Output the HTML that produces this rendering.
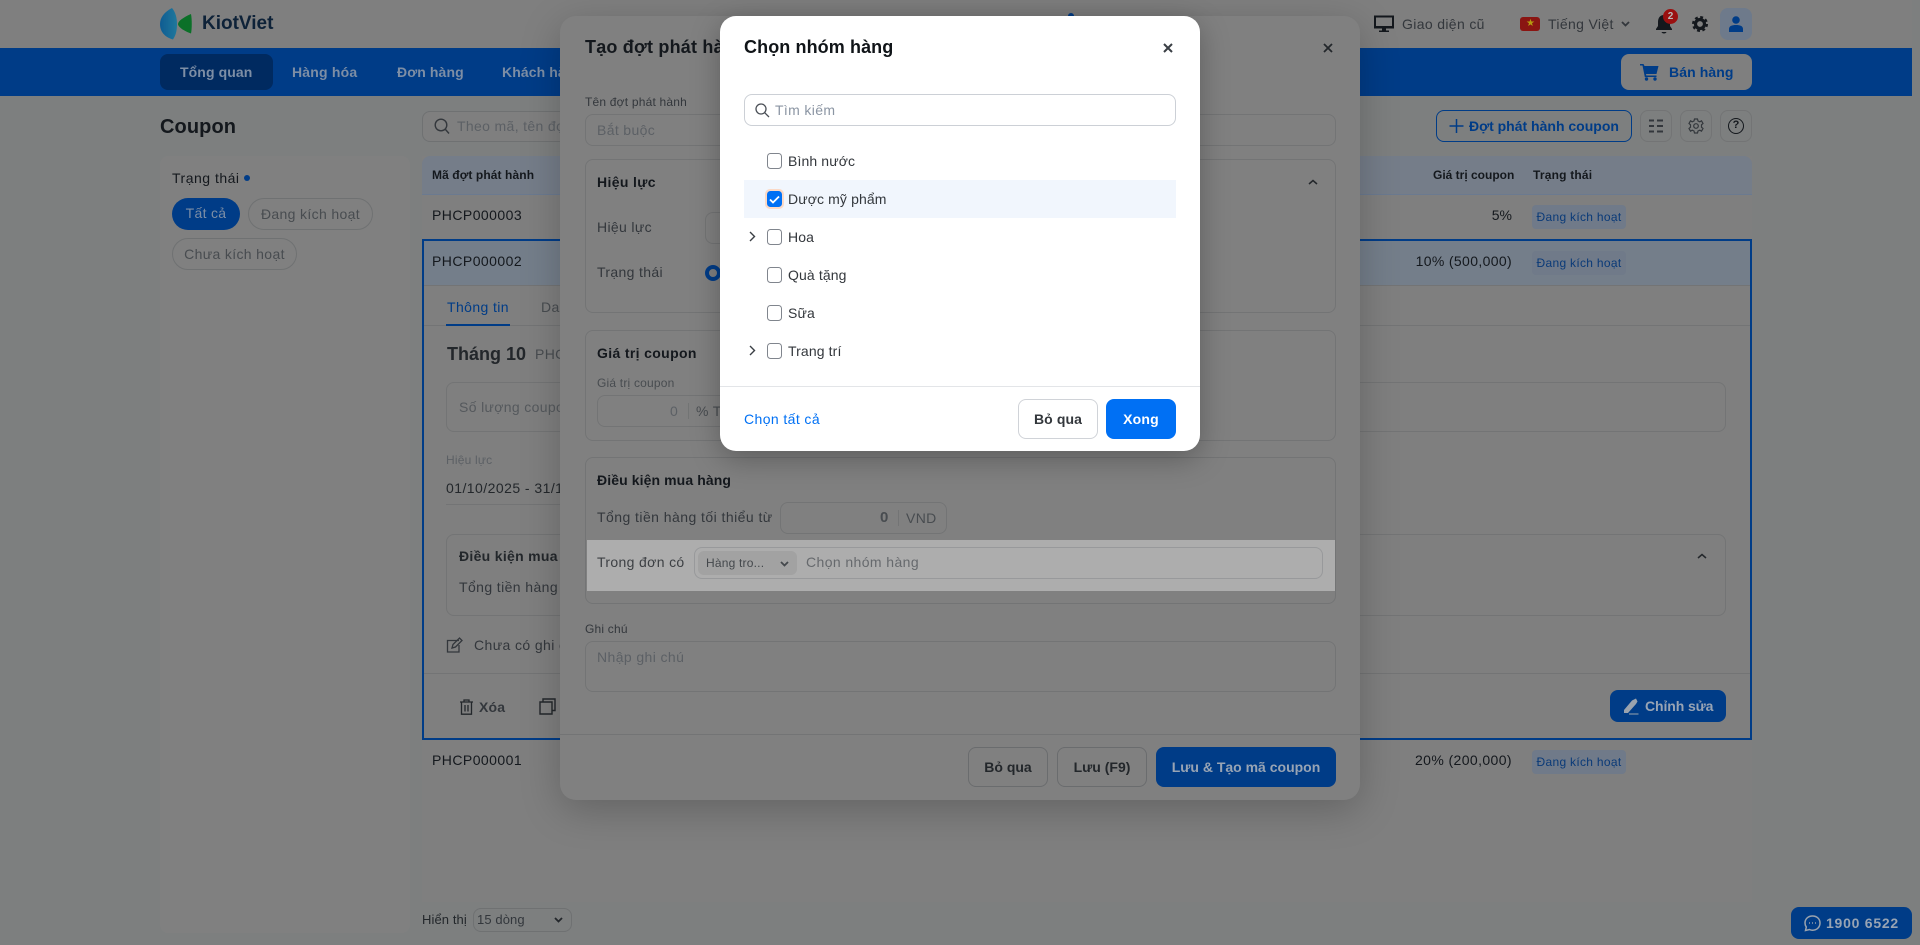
<!DOCTYPE html>
<html lang="vi"><head><meta charset="utf-8"><title>Coupon</title>
<style>
html,body{margin:0;padding:0;width:1920px;height:945px;overflow:hidden;background:#7d7f7f}
body{font-family:"Liberation Sans","DejaVu Sans",sans-serif;font-size:14px;color:#14181d;position:relative}
.a,.t{position:absolute;box-sizing:border-box}
.t{white-space:nowrap;line-height:20px;height:20px;letter-spacing:.35px}
.b{font-weight:700}
.s{font-size:12px;letter-spacing:.2px}
.g{color:#484c50}
.p{color:#5c6065}
.bl{color:#003c87}
.box{border:1px solid #737475;border-radius:8px}
.tag{background:#707a89;border-radius:4px;height:24px;width:94px;color:#0a3a78;font-size:12px;line-height:24px;text-align:center;letter-spacing:.3px}
.cb{position:absolute;left:766.5px;width:15.5px;height:15.5px;border:1.5px solid #80858d;border-radius:3.5px;box-sizing:border-box;background:#fff}
.m{color:#33373c;letter-spacing:.12px}
svg{position:absolute;overflow:visible}
</style></head><body>

<!-- header -->
<div class="a" style="left:0;top:0;width:1912px;height:48px;background:#7f7f7f"></div>
<svg style="left:0;top:0" width="200" height="48" viewBox="0 0 200 48">
<defs><linearGradient id="lg" x1="0" x2="1" y1="0" y2="0"><stop offset="0" stop-color="#0f5c92"/><stop offset="1" stop-color="#20789c"/></linearGradient></defs>
<path d="M172 8C164 12 160 18 160 24C160 31 164 37 173 39.500C176 35 177 30 177 24C177 18 175.500 12 172 8Z" fill="url(#lg)"/>
<path d="M191 14C184 17 178 21 178 24C178 27 184 31 191 33.500C192 29 192 19 191 14Z" fill="#0b7028"/>
</svg>
<div class="t b" style="left:202px;top:13px;font-size:19px;height:22px;line-height:22px;color:#0e2238;letter-spacing:0">KiotViet</div>

<svg style="left:1374px;top:15px" width="20" height="18" viewBox="0 0 20 18"><path d="M1 1.500H19V12.500H1Z" fill="none" stroke="#14181d" stroke-width="2"/><path d="M1 11H19V13.500H1ZM8 13.500H12V15.500H8ZM5 15.500H15V17H5Z" fill="#14181d"/></svg>
<div class="t g" style="left:1402px;top:14px;color:#33373c">Giao diện cũ</div>
<div class="a" style="left:1520px;top:17px;width:20px;height:14px;background:#8a1512;border-radius:3px"></div>
<div class="a" style="left:1526px;top:19px;color:#b59a10;font-size:10px;line-height:10px">★</div>
<div class="t" style="left:1548px;top:14px;color:#33373c">Tiếng Việt</div>
<svg style="left:1621px;top:21px" width="9" height="6" viewBox="0 0 9 6"><path d="M1 1L4.500 4.500L8 1" fill="none" stroke="#33373c" stroke-width="1.800"/></svg>
<svg style="left:1655px;top:14px" width="18" height="21" viewBox="0 0 18 21"><path d="M9 1C5 1 3 4 3 8V12L1 15V16H17V15L15 12V8C15 4 13 1 9 1ZM6.500 18C7 20 11 20 11.500 18Z" fill="#14181d"/></svg>
<div class="a" style="left:1663px;top:9px;width:15px;height:15px;border-radius:50%;background:#9a1010;color:#b9b9b9;font-size:10px;line-height:15px;text-align:center;font-weight:700">2</div>
<svg style="left:1692px;top:16px" width="16" height="16" viewBox="0 0 16 16"><circle cx="8" cy="8" r="4.500" fill="none" stroke="#14181d" stroke-width="3.200"/><circle cx="8" cy="8" r="6.900" fill="none" stroke="#14181d" stroke-width="2.200" stroke-dasharray="2.900 2.520"/></svg>
<div class="a" style="left:1720px;top:8px;width:32px;height:32px;border-radius:8px;background:#6e7a8b"></div>
<svg style="left:1729px;top:16px" width="14" height="16" viewBox="0 0 14 16"><circle cx="7" cy="4" r="3.800" fill="#003c87"/><path d="M0 16V13C0 10 3 9 7 9C11 9 14 10 14 13V16Z" fill="#003c87"/></svg>
<div class="a" style="left:1068px;top:13px;width:6px;height:6px;border-radius:50%;background:#003c87"></div>

<!-- nav -->
<div class="a" style="left:0;top:48px;width:1912px;height:48px;background:#003c87"></div>
<div class="a" style="left:160px;top:54px;width:113px;height:36px;background:#002a60;border-radius:8px"></div>
<div class="t b" style="left:180px;top:62px;color:#7d8ea5;letter-spacing:.1px">Tổng quan</div>
<div class="t b" style="left:292px;top:62px;color:#7d8ea5;letter-spacing:.2px">Hàng hóa</div>
<div class="t b" style="left:397px;top:62px;color:#7d8ea5;letter-spacing:.1px">Đơn hàng</div>
<div class="t b" style="left:502px;top:62px;color:#7d8ea5;letter-spacing:.1px">Khách hàng</div>
<div class="a" style="left:1621px;top:54px;width:131px;height:36px;background:#7f7f7f;border-radius:8px"></div>
<svg style="left:1640px;top:63px" width="19" height="18" viewBox="0 0 19 18"><path d="M0 1H3.500L4.500 3H18.500L16.500 11H6L6.300 12.500H16.500V14H4.800L2.500 2.500H0Z" fill="#003c87"/><circle cx="6.500" cy="16" r="1.700" fill="#003c87"/><circle cx="15" cy="16" r="1.700" fill="#003c87"/></svg>
<div class="t b bl" style="left:1669px;top:62px;letter-spacing:.1px">Bán hàng</div>

<!-- page toolbar -->
<div class="t b" style="left:160px;top:116px;font-size:20px;height:22px;line-height:22px;letter-spacing:.1px">Coupon</div>
<div class="a box" style="left:422px;top:111px;width:200px;height:31px;background:#7f7f7f;border-color:#6f7172"></div>
<svg style="left:434px;top:118px" width="16" height="17" viewBox="0 0 16 17"><circle cx="7" cy="7" r="5.800" fill="none" stroke="#33373c" stroke-width="1.400"/><path d="M11.500 11.500L15 15.500" stroke="#33373c" stroke-width="1.400"/></svg>
<div class="t p" style="left:457px;top:116px">Theo mã, tên đợt</div>

<div class="a" style="left:1436px;top:110px;width:196px;height:32px;border:1.2px solid #003c87;border-radius:8px"></div>
<svg style="left:1449px;top:118px" width="15" height="16" viewBox="0 0 15 16"><path d="M7.500 1V15M.5 8H14.500" stroke="#003c87" stroke-width="1.500"/></svg>
<div class="t b bl" style="left:1469px;top:116px;letter-spacing:0">Đợt phát hành coupon</div>
<div class="a box" style="left:1640px;top:110px;width:32px;height:32px"></div>
<svg style="left:1648px;top:119px" width="16" height="14" viewBox="0 0 16 14"><path d="M1 1.500H6M9 1.500H15M1 7H6M9 7H15M1 12.500H6M9 12.500H15" stroke="#33373c" stroke-width="2"/></svg>
<div class="a box" style="left:1680px;top:110px;width:32px;height:32px"></div>
<svg style="left:1688px;top:118px" width="16" height="16" viewBox="0 0 16 16"><path d="M6.500 1H9.500L10 3L11.800 3.800L13.500 2.800L15 5.500L13.500 6.800V9.200L15 10.500L13.500 13.200L11.800 12.200L10 13L9.500 15H6.500L6 13L4.200 12.200L2.500 13.200L1 10.500L2.500 9.200V6.800L1 5.500L2.500 2.800L4.200 3.800L6 3Z" fill="none" stroke="#33373c" stroke-width="1.200"/><circle cx="8" cy="8" r="2.300" fill="none" stroke="#33373c" stroke-width="1.200"/></svg>
<div class="a box" style="left:1720px;top:110px;width:32px;height:32px"></div>
<div class="a" style="left:1728px;top:118px;width:16px;height:16px;border:1.5px solid #14181d;border-radius:50%;font-size:11px;line-height:13px;text-align:center;font-weight:700;color:#14181d">?</div>

<!-- sidebar -->
<div class="a" style="left:160px;top:156px;width:250px;height:777px;background:#808080;border-radius:8px"></div>
<div class="t" style="left:172px;top:168px;color:#14181d;letter-spacing:.5px">Trạng thái</div>
<div class="a" style="left:244px;top:175px;width:6px;height:6px;border-radius:50%;background:#003c87"></div>
<div class="a" style="left:172px;top:198px;width:68px;height:32px;border-radius:16px;background:#003c87;color:#7d8ea5;text-align:center;line-height:31px;letter-spacing:.3px">Tất cả</div>
<div class="a" style="left:248px;top:198px;width:125px;height:32px;border-radius:16px;border:1px solid #6f7172;color:#484c50;text-align:center;line-height:30px;letter-spacing:.35px">Đang kích hoạt</div>
<div class="a" style="left:172px;top:238px;width:125px;height:32px;border-radius:16px;border:1px solid #6f7172;color:#484c50;text-align:center;line-height:30px;letter-spacing:.35px">Chưa kích hoạt</div>

<!-- table -->
<div class="a" style="left:422px;top:156px;width:1330px;height:746px;background:#7f7f7f"></div>
<div class="a" style="left:422px;top:156px;width:1330px;height:39px;background:#757d89;border-radius:8px 8px 0 0;border-bottom:1px solid #6b7a90"></div>
<div class="t b s" style="left:432px;top:165px;letter-spacing:.1px">Mã đợt phát hành</div>
<div class="t b s" style="left:1433px;top:165px;letter-spacing:0">Giá trị coupon</div>
<div class="t b s" style="left:1533px;top:165px;letter-spacing:.2px">Trạng thái</div>

<div class="t" style="left:432px;top:205px;letter-spacing:.45px">PHCP000003</div>
<div class="t" style="right:408px;top:205px;letter-spacing:0">5%</div>
<div class="a tag" style="left:1532px;top:205px">Đang kích hoạt</div>

<div class="a" style="left:422px;top:239px;width:1330px;height:501px;border:2px solid #003c87"></div>
<div class="a" style="left:424px;top:241px;width:1326px;height:45px;background:#747e8a;border-bottom:1px solid #737475"></div>
<div class="t" style="left:432px;top:251px;letter-spacing:.45px">PHCP000002</div>
<div class="t" style="right:408px;top:251px;letter-spacing:.35px">10% (500,000)</div>
<div class="a tag" style="left:1532px;top:251px">Đang kích hoạt</div>

<div class="t bl" style="left:447px;top:297px;letter-spacing:.4px">Thông tin</div>
<div class="t g" style="left:541px;top:297px">Danh sách</div>
<div class="a" style="left:424px;top:325px;width:1326px;height:1px;background:#737475"></div>
<div class="a" style="left:446px;top:324px;width:64px;height:2px;background:#003c87"></div>
<div class="t b" style="left:447px;top:343px;font-size:18px;height:22px;line-height:22px;color:#23272b;letter-spacing:0">Tháng 10</div>
<div class="t g" style="left:535px;top:344px">PHCP</div>
<div class="a box" style="left:446px;top:382px;width:1280px;height:50px"></div>
<div class="t p" style="left:459px;top:397px;color:#55595d">Số lượng coupon</div>
<div class="t s p" style="left:446px;top:450px">Hiệu lực</div>
<div class="t" style="left:446px;top:478px;color:#23272b;letter-spacing:.45px">01/10/2025 - 31/10/2025</div>
<div class="a" style="left:446px;top:504px;width:200px;height:1px;background:#737475"></div>
<div class="a box" style="left:446px;top:534px;width:1280px;height:82px"></div>
<div class="t b" style="left:459px;top:546px;color:#23272b;letter-spacing:.3px">Điều kiện mua hàng</div>
<div class="t" style="left:459px;top:577px;color:#33373c;letter-spacing:.4px">Tổng tiền hàng tối thiểu</div>
<svg style="left:1697px;top:553px" width="10" height="6" viewBox="0 0 10 6"><path d="M1 5L5 1.500L9 5" fill="none" stroke="#23272b" stroke-width="1.500"/></svg>
<svg style="left:446px;top:637px" width="17" height="16" viewBox="0 0 17 16"><path d="M13 3.500H1.500V15H13V8" fill="none" stroke="#33373c" stroke-width="1.300"/><path d="M6 11L7 7.500L13.500 1L16 3.500L9.500 10Z" fill="none" stroke="#33373c" stroke-width="1.300"/></svg>
<div class="t" style="left:474px;top:635px;color:#33373c;letter-spacing:.4px">Chưa có ghi chú</div>
<div class="a" style="left:424px;top:673px;width:1326px;height:1px;background:#737475"></div>
<svg style="left:459px;top:699px" width="15" height="16" viewBox="0 0 15 16"><path d="M1 3H14M5 3V1H10V3M2.500 3V15.200H12.500V3M6 6V12.500M9 6V12.500" fill="none" stroke="#23272b" stroke-width="1.300"/></svg>
<div class="t b" style="left:479px;top:697px;color:#33373c;letter-spacing:.2px">Xóa</div>
<svg style="left:539px;top:698px" width="17" height="17" viewBox="0 0 17 17"><path d="M4 4V1H16V12.500H13M1 4H13V16H1Z" fill="none" stroke="#23272b" stroke-width="1.400"/></svg>
<div class="a" style="left:1610px;top:690px;width:116px;height:32px;background:#003c87;border-radius:8px"></div>
<svg style="left:1623px;top:698px" width="16" height="17" viewBox="0 0 16 17"><path d="M1 12L9 2.500L13 .5L14.500 3.500L13 6L5 15H1ZM6 15.500H15.500V16.500H6Z" fill="#9aa3ae"/></svg>
<div class="t b" style="left:1645px;top:696px;color:#98a4b4;letter-spacing:-.1px">Chỉnh sửa</div>

<div class="t" style="left:432px;top:750px;letter-spacing:.45px">PHCP000001</div>
<div class="t" style="right:408px;top:750px;letter-spacing:.4px">20% (200,000)</div>
<div class="a tag" style="left:1532px;top:750px">Đang kích hoạt</div>

<div class="t" style="left:422px;top:910px;font-size:13px;color:#23272b;letter-spacing:.1px">Hiển thị</div>
<div class="a" style="left:473px;top:908px;width:99px;height:24px;border:1px solid #6f7172;border-radius:8px"></div>
<div class="t" style="left:477px;top:910px;font-size:13px;color:#33373c;letter-spacing:.1px">15 dòng</div>
<svg style="left:554px;top:917px" width="9" height="6" viewBox="0 0 9 6"><path d="M1 1L4.500 4.500L8 1" fill="none" stroke="#23272b" stroke-width="1.800"/></svg>

<div class="a" style="left:1791px;top:907px;width:121px;height:32px;background:#003c87;border-radius:8px"></div>
<svg style="left:1804px;top:915px" width="17" height="17" viewBox="0 0 17 17"><path d="M8.500 1C4 1 1 4 1 8C1 9.500 1.500 11 2.300 12L1.500 15.500L5.500 14.500C6.500 15 7.500 15.200 8.500 15.200C13 15.200 16 12 16 8C16 4 13 1 8.500 1Z" fill="none" stroke="#9aa3ae" stroke-width="1.500"/><path d="M5 8H5.800M8.200 8H9M11.200 8H12" stroke="#9aa3ae" stroke-width="1.800"/></svg>
<div class="t b" style="left:1826px;top:913px;color:#98a4b4;letter-spacing:.75px">1900 6522</div>

<!-- modal 1 -->
<div class="a" style="left:560px;top:16px;width:800px;height:784px;background:#808080;border-radius:16px;box-shadow:0 10px 40px rgba(0,0,0,.22)"></div>
<div class="t b" style="left:585px;top:36px;font-size:18px;height:22px;line-height:22px;letter-spacing:.2px">Tạo đợt phát hành coupon</div>
<svg style="left:1323px;top:43px" width="10" height="10" viewBox="0 0 10 10"><path d="M1 1L9 9M9 1L1 9" stroke="#23272b" stroke-width="1.800"/></svg>
<div class="t s" style="left:585px;top:92px;color:#33373c">Tên đợt phát hành</div>
<div class="a box" style="left:585px;top:114px;width:751px;height:32px"></div>
<div class="t p" style="left:597px;top:120px">Bắt buộc</div>
<div class="a box" style="left:585px;top:159px;width:751px;height:154px"></div>
<div class="t b" style="left:597px;top:172px;color:#14181d">Hiệu lực</div>
<svg style="left:1308px;top:179px" width="10" height="6" viewBox="0 0 10 6"><path d="M1 5L5 1.500L9 5" fill="none" stroke="#23272b" stroke-width="1.500"/></svg>
<div class="t" style="left:597px;top:217px;color:#33373c">Hiệu lực</div>
<div class="a box" style="left:705px;top:212px;width:100px;height:32px"></div>
<div class="t" style="left:597px;top:262px;color:#33373c">Trạng thái</div>
<div class="a" style="left:705px;top:265px;width:16px;height:16px;border-radius:50%;border:4.500px solid #003c87;background:#808080"></div>
<div class="a box" style="left:585px;top:330px;width:751px;height:111px"></div>
<div class="t b" style="left:597px;top:343px">Giá trị coupon</div>
<div class="t s" style="left:597px;top:373px;color:#484c50">Giá trị coupon</div>
<div class="a box" style="left:597px;top:395px;width:200px;height:32px"></div>
<div class="t p" style="left:670px;top:401px">0</div>
<div class="a" style="left:688px;top:403px;width:1px;height:16px;background:#737475"></div>
<div class="t g" style="left:696px;top:401px">% Tổng</div>
<div class="a box" style="left:585px;top:457px;width:751px;height:147px"></div>
<div class="t b" style="left:597px;top:470px;letter-spacing:.1px">Điều kiện mua hàng</div>
<div class="t" style="left:597px;top:507px;color:#33373c;letter-spacing:.45px">Tổng tiền hàng tối thiểu từ</div>
<div class="a box" style="left:780px;top:502px;width:167px;height:32px"></div>
<div class="t b" style="left:880px;top:508px;color:#484c50;font-size:15px">0</div>
<div class="a" style="left:898px;top:510px;width:1px;height:16px;background:#737475"></div>
<div class="t g" style="left:906px;top:508px">VND</div>

<!-- highlighted row -->
<div class="a" style="left:587px;top:540px;width:748px;height:51px;background:#adadad"></div>
<div class="t" style="left:597px;top:552px;color:#3d4044;letter-spacing:.35px">Trong đơn có</div>
<div class="a" style="left:694px;top:547px;width:629px;height:32px;border:1px solid #98999b;border-radius:8px"></div>
<div class="a" style="left:698px;top:551px;width:99px;height:24px;background:#a2a2a2;border-radius:6px"></div>
<div class="t s" style="left:706px;top:553px;color:#44484c;letter-spacing:.2px">Hàng tro...</div>
<svg style="left:780px;top:561px" width="9" height="6" viewBox="0 0 9 6"><path d="M1 1L4.500 4.500L8 1" fill="none" stroke="#44484c" stroke-width="1.800"/></svg>
<div class="t" style="left:806px;top:552px;color:#66696d;letter-spacing:.4px">Chọn nhóm hàng</div>

<div class="t s" style="left:585px;top:619px;color:#33373c">Ghi chú</div>
<div class="a box" style="left:585px;top:641px;width:751px;height:51px"></div>
<div class="t p" style="left:597px;top:647px;letter-spacing:.4px">Nhập ghi chú</div>
<div class="a" style="left:560px;top:734px;width:800px;height:1px;background:#737475"></div>
<div class="a" style="left:968px;top:747px;width:80px;height:40px;border:1px solid #6a6c6e;border-radius:8px;text-align:center;line-height:38px;font-weight:700;color:#23272b">Bỏ qua</div>
<div class="a" style="left:1057px;top:747px;width:90px;height:40px;border:1px solid #6a6c6e;border-radius:8px;text-align:center;line-height:38px;font-weight:700;color:#23272b">Lưu (F9)</div>
<div class="a" style="left:1156px;top:747px;width:180px;height:40px;background:#003c87;border-radius:8px;text-align:center;line-height:40px;font-weight:700;color:#98a4b4">Lưu &amp; Tạo mã coupon</div>

<!-- modal 2 -->
<div class="a" style="left:720px;top:16px;width:480px;height:435px;background:#fff;border-radius:16px;box-shadow:0 8px 30px rgba(0,0,0,.28)"></div>
<div class="t b" style="left:744px;top:36px;font-size:18px;height:22px;line-height:22px;color:#101418;letter-spacing:.1px">Chọn nhóm hàng</div>
<svg style="left:1163px;top:43px" width="10" height="10" viewBox="0 0 10 10"><path d="M1 1L9 9M9 1L1 9" stroke="#3a3f45" stroke-width="2"/></svg>
<div class="a" style="left:744px;top:94px;width:432px;height:32px;border:1px solid #ccd0d6;border-radius:8px;background:#fff"></div>
<svg style="left:755px;top:103px" width="15" height="15" viewBox="0 0 15 15"><circle cx="6" cy="6" r="5" fill="none" stroke="#4a4f56" stroke-width="1.300"/><path d="M9.800 9.800L14 14" stroke="#4a4f56" stroke-width="1.300"/></svg>
<div class="t" style="left:775px;top:100px;color:#8b95a3;letter-spacing:.35px">Tìm kiếm</div>

<div class="a" style="left:744px;top:180px;width:432px;height:38px;background:#f1f6fd"></div>
<div class="cb" style="top:153px"></div><div class="t m" style="left:788px;top:151px">Bình nước</div>
<div class="a" style="left:764.5px;top:189px;width:19.500px;height:19.500px;border-radius:5px;background:#fbd9c6"></div>
<div class="cb" style="top:191px;background:#0070f4;border-color:#0070f4"></div>
<svg style="left:769px;top:195px" width="11" height="9" viewBox="0 0 11 9"><path d="M1 4.500L4 7.500L10 1.500" fill="none" stroke="#fff" stroke-width="1.800"/></svg>
<div class="t m" style="left:788px;top:189px">Dược mỹ phẩm</div>
<svg style="left:749px;top:231px" width="7" height="11" viewBox="0 0 7 11"><path d="M1 1L5.500 5.500L1 10" fill="none" stroke="#3a3f45" stroke-width="1.400"/></svg>
<div class="cb" style="top:229px"></div><div class="t m" style="left:788px;top:227px">Hoa</div>
<div class="cb" style="top:267px"></div><div class="t m" style="left:788px;top:265px">Quà tặng</div>
<div class="cb" style="top:305px"></div><div class="t m" style="left:788px;top:303px">Sữa</div>
<svg style="left:749px;top:345px" width="7" height="11" viewBox="0 0 7 11"><path d="M1 1L5.500 5.500L1 10" fill="none" stroke="#3a3f45" stroke-width="1.400"/></svg>
<div class="cb" style="top:343px"></div><div class="t m" style="left:788px;top:341px">Trang trí</div>
<div class="a" style="left:720px;top:386px;width:480px;height:1px;background:#e3e5e8"></div>
<div class="t" style="left:744px;top:409px;color:#0070f4;letter-spacing:.4px">Chọn tất cả</div>
<div class="a" style="left:1018px;top:399px;width:80px;height:40px;border:1px solid #d0d3d8;border-radius:8px;text-align:center;line-height:38px;font-weight:700;color:#33373c;letter-spacing:.1px">Bỏ qua</div>
<div class="a" style="left:1106px;top:399px;width:70px;height:40px;background:#0070f4;border-radius:8px;text-align:center;line-height:40px;font-weight:700;color:#fff;letter-spacing:.2px">Xong</div>
</body></html>
